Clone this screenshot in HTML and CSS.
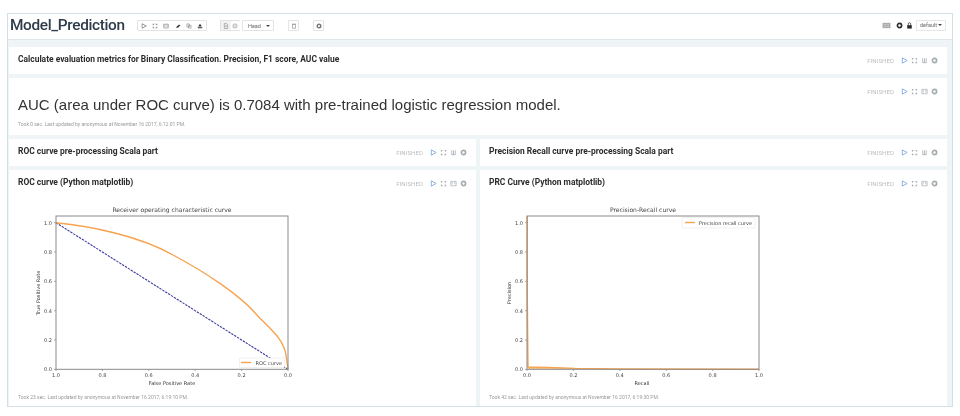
FILE: index.html
```html
<!DOCTYPE html>
<html lang="en">
<head>
<meta charset="utf-8">
<title>Model_Prediction</title>
<link rel="stylesheet" href="styles.css">
</head>
<body>
<svg class="defs" width="0" height="0" aria-hidden="true">
  <symbol id="i-play" viewBox="0 0 8 8"><path d="M1.5 1 L7 4 L1.5 7 Z" fill="none" stroke="currentColor" stroke-width="1"/></symbol>
  <symbol id="i-expand" viewBox="0 0 8 8"><path d="M1 1h2v1H2v1H1zM5 1h2v2H6V2H5zM1 5h1v1h1v1H1zM6 5h1v2H5V6h1z" fill="currentColor"/></symbol>
  <symbol id="i-book" viewBox="0 0 8 8"><path d="M1 1.5h2.6l.4.5.4-.5H7v5H4.4L4 7l-.4-.5H1z" fill="none" stroke="currentColor" stroke-width=".8"/><path d="M1.8 3h1.6M1.8 4.3h1.6M4.6 3h1.6M4.6 4.3h1.6" stroke="currentColor" stroke-width=".6"/></symbol>
  <symbol id="i-col" viewBox="0 0 8 8"><path d="M2 1.5v5h4v-5M4 1.5v5" fill="none" stroke="currentColor" stroke-width=".9"/></symbol>
  <symbol id="i-gear" viewBox="0 0 8 8"><circle cx="4" cy="4" r="2.4" fill="none" stroke="currentColor" stroke-width="1.9"/></symbol>
  <symbol id="i-eraser" viewBox="0 0 8 8"><path d="M1 6 L5 2.2 L7.4 2.6 L4 6.2 Z" fill="currentColor"/></symbol>
  <symbol id="i-copy" viewBox="0 0 8 8"><path d="M1.2 1.2h3.2v4H1.2zM3.4 3h3.4v3.8H3.4z" fill="#fff" stroke="currentColor" stroke-width=".7"/></symbol>
  <symbol id="i-down" viewBox="0 0 8 8"><path d="M4 1 L6.4 4.5 H1.6 Z M1 5.5h6V7H1z" fill="currentColor"/></symbol>
  <symbol id="i-file" viewBox="0 0 8 8"><path d="M1.8 .8h3l1.4 1.5v5H1.8z" fill="none" stroke="currentColor" stroke-width=".7"/><path d="M2.8 3.6h2.4M2.8 4.8h2.4" stroke="currentColor" stroke-width=".5"/></symbol>
  <symbol id="i-minus" viewBox="0 0 8 8"><circle cx="4" cy="4" r="2.8" fill="none" stroke="currentColor" stroke-width=".7"/><path d="M2.5 4h3" stroke="currentColor" stroke-width=".7"/></symbol>
  <symbol id="i-trash" viewBox="0 0 8 8"><path d="M2 2h4v5H2zM1.4 1.4h5.2" fill="none" stroke="currentColor" stroke-width=".7"/></symbol>
  <symbol id="i-keys" viewBox="0 0 10 8"><rect x=".5" y="1" width="9" height="6" fill="currentColor"/><path d="M2 3h6M2 5h6" stroke="#fff" stroke-width=".6" stroke-dasharray="1 .6"/></symbol>
  <symbol id="i-lock" viewBox="0 0 8 8"><rect x="1.4" y="3.6" width="5.2" height="3.9" fill="currentColor"/><path d="M2.6 3.6V2.2a1.4 1.4 0 0 1 2.8 0v1.4" fill="none" stroke="currentColor" stroke-width=".8"/></symbol>
</svg>
<div class="frame">
  <header class="topbar">
    <h1 class="nb-title">Model_Prediction</h1>
    <div class="btn-group tools">
      <span class="tool"><svg class="ic"><use href="#i-play"/></svg></span>
      <span class="tool"><svg class="ic"><use href="#i-expand"/></svg></span>
      <span class="tool"><svg class="ic"><use href="#i-book"/></svg></span>
      <span class="tool dark"><svg class="ic"><use href="#i-eraser"/></svg></span>
      <span class="tool"><svg class="ic"><use href="#i-copy"/></svg></span>
      <span class="tool dark"><svg class="ic"><use href="#i-down"/></svg></span>
    </div>
    <div class="btn-group versions">
      <span class="tool boxed"><svg class="ic"><use href="#i-file"/></svg></span>
      <span class="tool"><svg class="ic"><use href="#i-minus"/></svg></span>
    </div>
    <div class="btn-group head-select"><span class="head-name">Head</span><span class="caret"></span></div>
    <div class="btn-group single trash"><svg class="ic"><use href="#i-trash"/></svg></div>
    <div class="btn-group single cog"><svg class="ic"><use href="#i-gear"/></svg></div>
    <div class="top-right">
      <svg class="ic-key"><use href="#i-keys"/></svg>
      <svg class="ic-dark"><use href="#i-gear"/></svg>
      <svg class="ic-dark"><use href="#i-lock"/></svg>
      <span class="default-btn">default<span class="caret small"></span></span>
    </div>
  </header>

  <main class="cells">
    <section class="card span2 row-one">
      <h2 class="card-title">Calculate evaluation metrics for Binary Classification. Precision, F1 score, AUC value</h2>
      <div class="status"><span class="finished">FINISHED</span><svg class="ic play"><use href="#i-play"/></svg><svg class="ic"><use href="#i-expand"/></svg><svg class="ic"><use href="#i-col"/></svg><svg class="ic"><use href="#i-gear"/></svg></div>
    </section>

    <section class="card span2 auc">
      <div class="status auc-status"><span class="finished">FINISHED</span><svg class="ic play"><use href="#i-play"/></svg><svg class="ic"><use href="#i-expand"/></svg><svg class="ic"><use href="#i-book"/></svg><svg class="ic"><use href="#i-gear"/></svg></div>
      <p class="auc-text">AUC (area under ROC curve) is 0.7084 with pre-trained logistic regression model.</p>
      <p class="meta">Took 0 sec. Last updated by anonymous at November 16 2017, 6:12:01 PM.</p>
    </section>

    <section class="card row-one">
      <h2 class="card-title">ROC curve pre-processing Scala part</h2>
      <div class="status"><span class="finished">FINISHED</span><svg class="ic play"><use href="#i-play"/></svg><svg class="ic"><use href="#i-expand"/></svg><svg class="ic"><use href="#i-col"/></svg><svg class="ic"><use href="#i-gear"/></svg></div>
    </section>
    <section class="card row-one">
      <h2 class="card-title">Precision Recall curve pre-processing Scala part</h2>
      <div class="status"><span class="finished">FINISHED</span><svg class="ic play"><use href="#i-play"/></svg><svg class="ic"><use href="#i-expand"/></svg><svg class="ic"><use href="#i-col"/></svg><svg class="ic"><use href="#i-gear"/></svg></div>
    </section>

    <section class="card plot-card">
      <div class="plot-head">
        <h2 class="card-title">ROC curve (Python matplotlib)</h2>
        <div class="status"><span class="finished">FINISHED</span><svg class="ic play"><use href="#i-play"/></svg><svg class="ic"><use href="#i-expand"/></svg><svg class="ic"><use href="#i-book"/></svg><svg class="ic"><use href="#i-gear"/></svg></div>
      </div>
      <svg class="plot" viewBox="9 200 467 190" width="467" height="190" role="img" aria-label="Receiver operating characteristic curve">
        <text class="p-title" x="172" y="212" text-anchor="middle">Receiver operating characteristic curve</text>
        <path class="p-ticks" d="M54 222.7h2M54 252h2M54 281.3h2M54 310.7h2M54 340h2M54 369.3h2M56 369v2M102.4 369v2M148.8 369v2M195.2 369v2M241.6 369v2M288 369v2"/>
        <g class="p-lab" text-anchor="end">
          <text x="52" y="224.5">1.0</text><text x="52" y="254">0.8</text><text x="52" y="283">0.6</text><text x="52" y="312.5">0.4</text><text x="52" y="342">0.2</text><text x="52" y="371">0.0</text>
        </g>
        <g class="p-lab" text-anchor="middle">
          <text x="56" y="377">1.0</text><text x="102.4" y="377">0.8</text><text x="148.8" y="377">0.6</text><text x="195.2" y="377">0.4</text><text x="241.6" y="377">0.2</text><text x="288" y="377">0.0</text>
          <text class="p-axis" x="172" y="384.5">False Positive Rate</text>
          <text class="p-axis" transform="translate(40 293) rotate(-90)">True Positive Rate</text>
        </g>
        <path class="p-diag" d="M56 222.7 L288 369.3"/>
        <path class="p-curve" d="M56 222.7 C90 226 140 236 173 255 C205 272 240 295 257 315 C270 329 283 338 286 355 L288 369"/>
        <rect class="p-legend" x="239.5" y="358" width="45" height="9.5" rx="1"/>
        <path class="p-curve" d="M241 362.5h10"/>
        <text class="p-lab" x="255.5" y="364.5">ROC curve</text>
        <rect class="p-frame" x="56" y="216" width="232" height="153.3"/>
      </svg>
      <p class="meta">Took 23 sec. Last updated by anonymous at November 16 2017, 6:19:10 PM.</p>
    </section>

    <section class="card plot-card">
      <div class="plot-head">
        <h2 class="card-title">PRC Curve (Python matplotlib)</h2>
        <div class="status"><span class="finished">FINISHED</span><svg class="ic play"><use href="#i-play"/></svg><svg class="ic"><use href="#i-expand"/></svg><svg class="ic"><use href="#i-book"/></svg><svg class="ic"><use href="#i-gear"/></svg></div>
      </div>
      <svg class="plot" viewBox="480 200 467 190" width="467" height="190" role="img" aria-label="Precision-Recall curve">
        <text class="p-title" x="643" y="212" text-anchor="middle">Precision-Recall curve</text>
        <path class="p-ticks" d="M525 222.7h2M525 252h2M525 281.3h2M525 310.7h2M525 340h2M525 369.3h2M527 369v2M573.4 369v2M619.8 369v2M666.2 369v2M712.6 369v2M759 369v2"/>
        <g class="p-lab" text-anchor="end">
          <text x="523" y="224.5">1.0</text><text x="523" y="254">0.8</text><text x="523" y="283">0.6</text><text x="523" y="312.5">0.4</text><text x="523" y="342">0.2</text><text x="523" y="371">0.0</text>
        </g>
        <g class="p-lab" text-anchor="middle">
          <text x="527" y="377">0.0</text><text x="573.4" y="377">0.2</text><text x="619.8" y="377">0.4</text><text x="666.2" y="377">0.6</text><text x="712.6" y="377">0.8</text><text x="759" y="377">1.0</text>
          <text class="p-axis" x="642" y="384.5">Recall</text>
          <text class="p-axis" transform="translate(511 293) rotate(-90)">Precision</text>
        </g>
        <path class="p-fill" d="M528 367 L548 367.2 L575 368.2 L575 369 L528 369 Z"/>
        <path class="p-curve" d="M527.3 216 L527.3 300 L528 367 L548 367.4 L575 368.4 L620 369 L759 369.2"/>
        <rect class="p-legend" x="682" y="217.5" width="73" height="10.5" rx="1"/>
        <path class="p-curve" d="M685 222.5h10"/>
        <text class="p-lab" x="699" y="224.5">Precision recall curve</text>
        <rect class="p-frame" x="527" y="216" width="232" height="153.3"/>
      </svg>
      <p class="meta">Took 42 sec. Last updated by anonymous at November 16 2017, 6:19:30 PM.</p>
    </section>
  </main>
</div>
</body>
</html>
```

FILE: styles.css
```css
* { box-sizing: border-box; }
html, body { margin: 0; padding: 0; background: #fff; }
body { font-family: Roboto, "Liberation Sans", sans-serif; color: #333; width: 960px; height: 416px; overflow: hidden; }
.defs { position: absolute; }
p, h1, h2 { margin: 0; }

.frame {
  margin: 13px 0 0 7px;
  width: 946px;
  height: 394px;
  border: 1px solid #d3dfe6;
  background: #eff4f7;
  display: flex;
  flex-direction: column;
  filter: blur(0.5px);
}

.topbar {
  height: 26px;
  flex: none;
  background: #fff;
  border-bottom: 1px solid #dfe6ea;
  display: flex;
  align-items: center;
  padding: 0 6px 2px 2px;
  color: #555;
}
.nb-title { font-size: 15.4px; font-weight: 500; color: #2f3b4a; width: 127px; letter-spacing: -.35px; white-space: nowrap; position: relative; top: -1px; }

.btn-group { display: flex; align-items: center; height: 11px; border: 1px solid #e3e3e3; border-radius: 1px; background: #fff; }
.tool { width: 11.5px; height: 100%; display: flex; align-items: center; justify-content: center; color: #777; }
.tool.dark { color: #333; }
.tool.boxed { background: #f2f2f2; }
.tools { width: 70px; }
.versions { margin-left: 13px; width: 20px; border-right: 0; }
.versions .tool { width: 9.5px; }
.ic { width: 6px; height: 6px; display: block; flex: none; }
.head-select { margin-left: 2px; width: 32px; color: #666; font-size: 5.5px; padding-left: 5px; position: relative; }
.head-name { flex: 1; }
.caret { width: 0; height: 0; margin-right: 3px; border: 2px solid transparent; border-top-color: #444; border-bottom: 0; }
.caret.small { display: inline-block; margin: 0 0 1px 1px; vertical-align: middle; }
.single { width: 11px; justify-content: center; color: #777; }
.trash { margin-left: 14px; }
.cog { margin-left: 14px; }

.top-right { margin-left: auto; display: flex; align-items: center; }
.ic-key { width: 9px; height: 7px; color: #aaa; margin-right: 5px; }
.ic-dark { width: 7px; height: 7px; color: #2a2a2a; margin-right: 3px; }
.default-btn { width: 30px; height: 11px; border: 1px solid #e6e6e6; border-radius: 1px; font-size: 5.5px; color: #666; line-height: 9px; text-align: center; white-space: nowrap; }

.cells {
  flex: 1;
  min-height: 0;
  display: grid;
  grid-template-columns: 467px 467px;
  grid-template-rows: 27px 57px 27px 1fr;
  column-gap: 4px;
  row-gap: 4px;
  padding: 7px 0 0 1px;
}
.card { background: #fff; min-width: 0; }
.span2 { grid-column: 1 / 3; width: 938px; }
.row-one { display: flex; align-items: center; justify-content: space-between; padding: 0 9px 3px 9px; }
.card-title { font-size: 8.45px; font-weight: 700; color: #2b2b2b; white-space: nowrap; }

.status { display: flex; align-items: center; gap: 3px; color: #a4abb0; flex: none; position: relative; top: 1px; }
.status .ic { width: 7px; height: 7px; }
.status .play { color: #7fa8dc; }
.finished { font-size: 6px; color: #b9bdc0; letter-spacing: .1px; margin-right: 4px; }

.auc { padding: 7px 9px 0 9px; display: flex; flex-direction: column; }
.auc-status { align-self: flex-end; height: 12px; top: 0; }
.auc-text { font-family: "Liberation Sans", Arial, sans-serif; font-size: 15px; line-height: 20px; color: #333; margin-top: -2px; white-space: nowrap; }
.meta { font-size: 5px; line-height: 6px; color: #9a9a9a; white-space: nowrap; margin-top: 6px; }

.plot-card { display: flex; flex-direction: column; }
.plot-head { display: flex; justify-content: space-between; align-items: center; height: 24px; padding: 0 9px 0 9px; flex: none; margin-bottom: 6px; }
.plot { display: block; flex: none; }
.plot-card .meta { padding-left: 9px; margin-top: 4px; }

.p-title { font-size: 6.05px; fill: #444; font-family: "DejaVu Sans", sans-serif; }
.p-lab { font-size: 5px; fill: #444; font-family: "DejaVu Sans", sans-serif; }
.p-axis { font-size: 5px; fill: #333; }
.p-frame { fill: none; stroke: #8a8a8a; stroke-width: 1; }
.p-ticks { stroke: #555; stroke-width: .5; fill: none; }
.p-diag { stroke: #3c3c9c; stroke-width: 1.1; stroke-dasharray: 2.4 1; fill: none; }
.p-curve { stroke: #f6a24e; stroke-width: 1.4; fill: none; }
.p-fill { fill: #f9c48b; }
.p-legend { fill: #fff; stroke: #e3e3e3; stroke-width: .5; }
```
